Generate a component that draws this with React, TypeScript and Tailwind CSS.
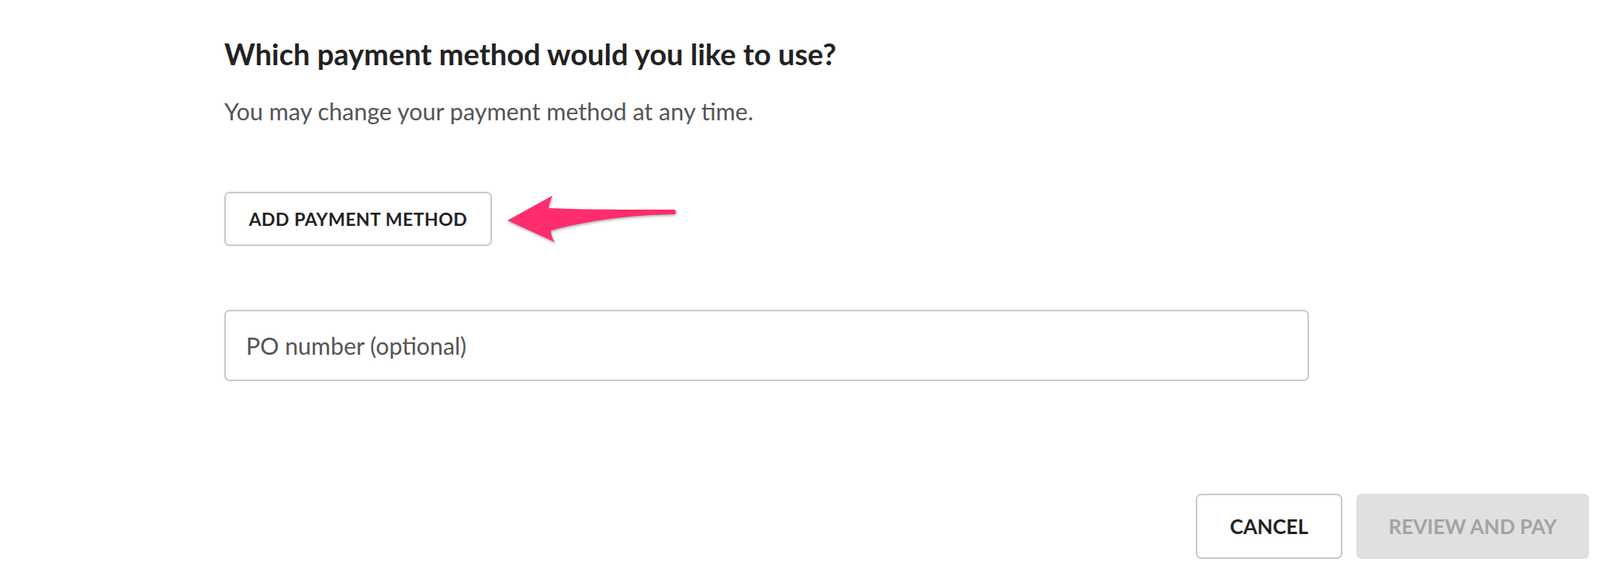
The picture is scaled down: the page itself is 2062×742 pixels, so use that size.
import React from "react";

function PointerArrow() {
  return (
    <svg
      width="224"
      height="66"
      viewBox="0 0 224 66"
      className="drop-shadow-[1px_2px_1.5px_rgba(0,0,0,0.28)]"
    >
      <path
        d="M2 35 L60 3 Q56 12 55 19 C90 21 160 21 216 21 A3 3 0 0 1 216 27 C160 28 100 36 58 48 Q58 56 63 63 Z"
        fill="#ff2d6d"
      />
    </svg>
  );
}

export default function App() {
  return (
    <div className="flex min-h-[742px] w-[2062px] flex-col bg-white font-['Lato',sans-serif] text-[#222]">
      <div className="pl-[289px] pt-[47px]">
        <h1 className="text-[38px] font-bold leading-[44px] text-[#222]">
          Which payment method would you like to use?
        </h1>
        <p className="mt-[32px] text-[30.5px] leading-[40px] text-[#555]">
          You may change your payment method at any time.
        </p>

        <div className="mt-[84px] flex items-center gap-[18px]">
          <button className="flex h-[70px] w-[345px] items-center justify-center rounded-[7px] border-2 border-[#c9c9c9] bg-white text-[23px] font-bold tracking-[0.5px] text-[#222]">
            ADD PAYMENT METHOD
          </button>
          <PointerArrow />
        </div>

        <input
          type="text"
          placeholder="PO number (optional)"
          className="mt-[82px] block h-[92px] w-[1398px] rounded-[7px] border-2 border-[#c9c9c9] bg-white pl-[26px] text-[30.3px] text-[#222] outline-none placeholder:text-[#555]"
        />
      </div>

      <div className="mt-[145px] flex justify-end gap-[18px] pr-[14px]">
        <button className="flex h-[84px] w-[189px] items-center justify-center rounded-[7px] border-2 border-[#c9c9c9] bg-white text-[26px] font-bold text-[#222]">
          CANCEL
        </button>
        <button
          disabled
          className="flex h-[84px] w-[300px] items-center justify-center rounded-[7px] bg-[#e0e0e0] text-[26px] font-bold text-[#a3a3a3]"
        >
          REVIEW AND PAY
        </button>
      </div>
    </div>
  );
}
